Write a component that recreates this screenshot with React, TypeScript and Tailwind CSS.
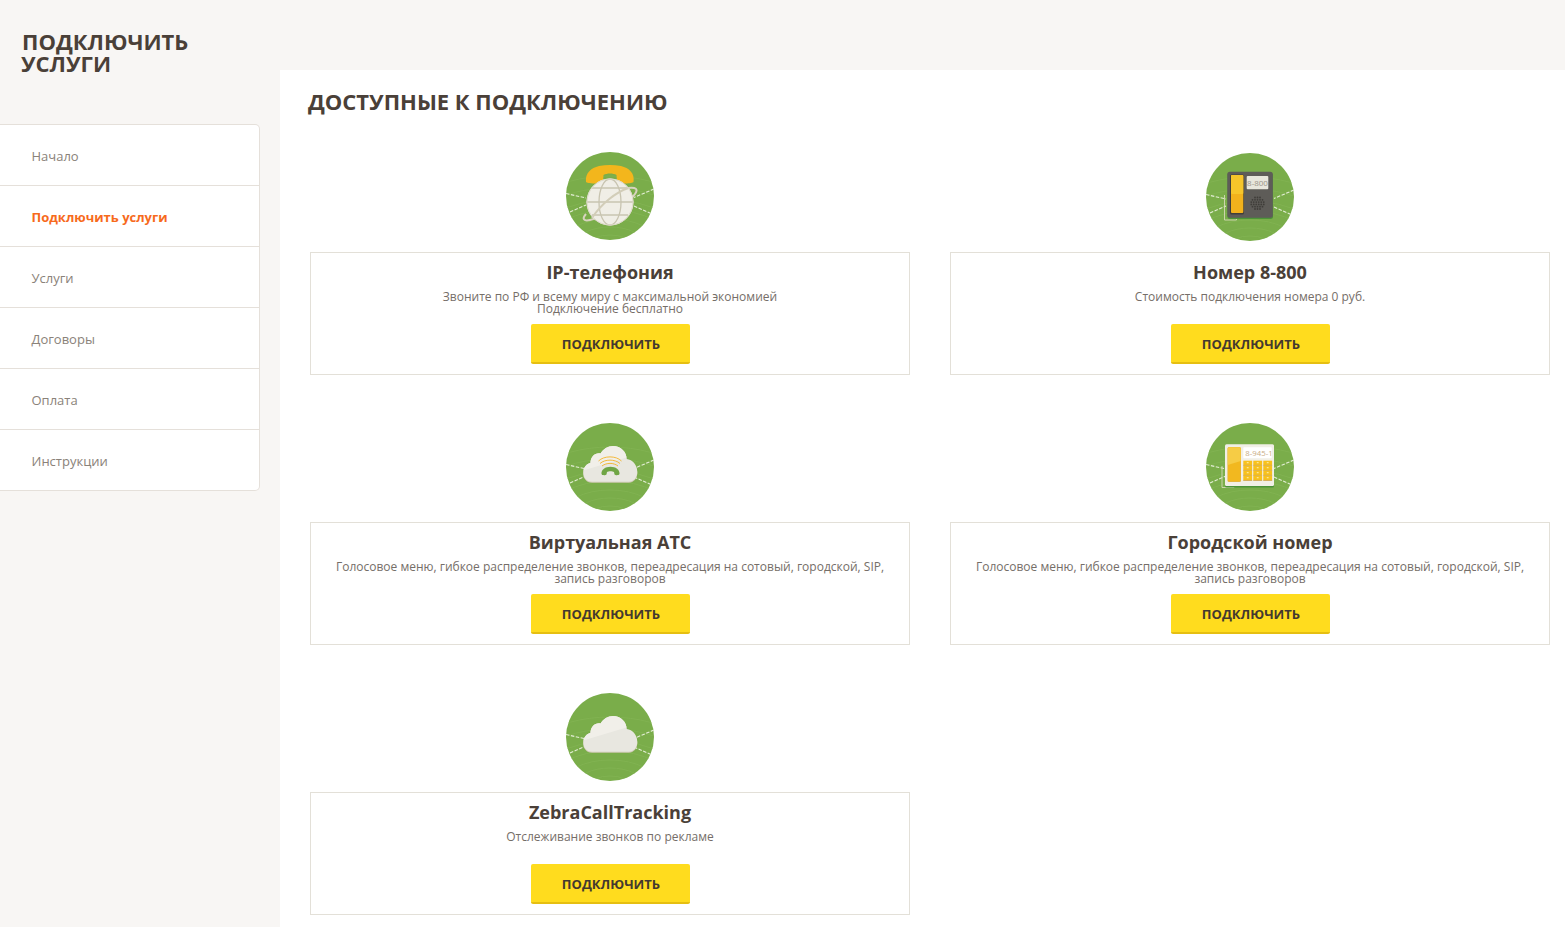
import React from "react";

const nav = ["Начало", "Подключить услуги", "Услуги", "Договоры", "Оплата", "Инструкции"];

function Base({ children }: { children: React.ReactNode }) {
  return (
    <svg width="88" height="88" viewBox="0 0 88 88" className="block">
      <defs>
        <clipPath id="circ"><circle cx="44" cy="44" r="44" /></clipPath>
      </defs>
      <circle cx="44" cy="44" r="44" fill="#7aad4a" />
      <g clipPath="url(#circ)" fill="none" stroke="#84b455" strokeWidth="0.7">
        <ellipse cx="44" cy="92" rx="20" ry="9" />
        <ellipse cx="44" cy="92" rx="34" ry="17" />
        <ellipse cx="44" cy="92" rx="48" ry="25" />
        <ellipse cx="44" cy="92" rx="62" ry="34" />
        <ellipse cx="44" cy="92" rx="76" ry="44" />
        <ellipse cx="44" cy="92" rx="90" ry="56" />
        <ellipse cx="44" cy="92" rx="104" ry="68" />
      </g>
      <g stroke="#e4eed6" strokeWidth="1.100" strokeDasharray="3.5 1.5" fill="none">
        <path d="M0 41.5L20 46" />
        <path d="M4 60L20 53" />
        <path d="M88 37L68 45.5" />
        <path d="M68 54L86 62" />
      </g>
      {children}
    </svg>
  );
}

function CloudShape({ id }: { id: string }) {
  const d = "M26 58.700C20 58.700 17.300 54 17.300 49.500C17.300 44 21 40.500 24.500 40C24.500 34 29 29.500 34.500 30.500C37 26 42 23 47 23C55 23 60.500 29 60.700 36C66.500 36.500 71.300 42 71.300 49C71.300 54.500 67.500 58.700 63 58.700Z";
  return (
    <>
      <defs>
        <clipPath id={id}><path d={d} /></clipPath>
      </defs>
      <path d={d} transform="translate(0 1)" fill="#cfc9b4" />
      <path d={d} fill="#e8e7e0" />
      <path d="M15 48L62 34L62 18L15 18Z" fill="#f1efe9" clipPath={`url(#${id})`} />
    </>
  );
}

function GlobeIcon() {
  return (
    <Base>
      <path d="M20 30C19 21 25 16 33 14C40 12.500 48 12.500 55 14C63 16 69 21 67.500 30C66.500 32 52 32 51 29.500L50.500 23C47 21 41 21 37.500 23L37 29.500C36 32 21 32 20 30Z" fill="#f3b61c" />
      <path d="M62 36C70 35 72.500 37 69 42C63 51 43 63 24 68C18 69.500 15.500 67 20 62" fill="none" stroke="#d8d3bf" strokeWidth="2" />
      <circle cx="44" cy="50" r="23.500" fill="#f0eee6" />
      <g fill="none" stroke="#c8c4b0" strokeWidth="1.300">
        <ellipse cx="44" cy="50" rx="11" ry="23" />
        <path d="M25.500 36H62.500" />
        <path d="M20.500 50H67.500" />
        <path d="M26 63H62" />
        <path d="M62.500 36C50 40 35 52 26 66" stroke="#d2cdb8" strokeWidth="2" />
        <circle cx="44" cy="50" r="23" stroke="#dcd8c8" strokeWidth="1" />
      </g>
    </Base>
  );
}

function Cord({ d }: { d: string }) {
  return <path d={d} fill="none" stroke="#d5d9b6" strokeWidth="0.9" />;
}

function Desk800Icon() {
  const dots: React.ReactNode[] = [];
  const rows = [3, 5, 6, 6, 5, 3];
  rows.forEach((n, r) => {
    for (let i = 0; i < n; i++) {
      dots.push(<circle key={`${r}-${i}`} cx={51.500 + (i - (n - 1) / 2) * 2.500} cy={44.500 + r * 2.300} r="0.900" fill="#3f3d39" />);
    }
  });
  return (
    <Base>
      <Cord d="M18.500 42V67H30.500V60" />
      <rect x="21.500" y="20" width="45.500" height="46" rx="2.500" fill="#4c9338" />
      <rect x="21.300" y="18.700" width="45.500" height="46" rx="2.500" fill="#5e5c58" />
      <rect x="24" y="21.500" width="14" height="40" rx="1.500" fill="#403f3b" />
      <rect x="25" y="22" width="12.300" height="38" rx="1" fill="#f2b21c" />
      <rect x="25" y="22" width="12.300" height="19" rx="1" fill="#f6c52a" />
      <rect x="40.700" y="23" width="21.600" height="13.300" rx="1" fill="#e8e6dc" />
      <text x="51.500" y="32.700" textAnchor="middle" fontSize="8" fill="#9b9488" fontFamily="'Open Sans', sans-serif">8-800</text>
      {dots}
    </Base>
  );
}

function CityIcon() {
  const keys: React.ReactNode[] = [];
  [37.300, 47.300, 57.300].forEach((x, c) => {
    [0, 1, 2, 3].forEach((r) => {
      keys.push(<rect key={`${c}-${r}`} x={x} y={37.700 + r * 5} width="8.800" height="5" fill="#f8c11c" />);
      keys.push(<rect key={`d${c}-${r}`} x={x + 3.500} y={39.200 + r * 5} width="1.800" height="1" fill="#fdeeb0" />);
      keys.push(<rect key={`s${c}-${r}`} x={x} y={41.900 + r * 5} width="8.800" height="0.800" fill="#c9a35e" />);
    });
  });
  return (
    <Base>
      <Cord d="M16 43V64.500H28V59" />
      <rect x="19" y="22.500" width="49" height="42" rx="1.500" fill="#4c9338" />
      <rect x="19" y="21.300" width="49" height="41.700" rx="1.500" fill="#f1efe6" />
      <rect x="21.500" y="24" width="13.500" height="35" rx="1.500" fill="#d9b35a" />
      <rect x="21.800" y="24.300" width="12.900" height="34.300" rx="1.500" fill="#f2b81f" />
      <path d="M21.800 42V25.800C21.800 25 22.500 24.300 23.300 24.300H33.200C34 24.300 34.700 25 34.700 25.800V38Z" fill="#f6cc45" />
      <rect x="37.300" y="24.300" width="28.400" height="11" rx="0.800" fill="#ffffff" />
      <svg x="37.300" y="24.300" width="28.400" height="11" viewBox="0 0 28.400 11">
        <text x="2" y="8.300" fontSize="7.800" fill="#c9ad86" fontFamily="'Open Sans', sans-serif">8-945-12</text>
      </svg>
      {keys}
    </Base>
  );
}

function VatsIcon() {
  return (
    <Base>
      <CloudShape id="cloud-a" />
      <g fill="none" stroke="#f3b32a" strokeWidth="0.900">
        <path d="M32.500 38C38 32.500 50 32.500 55.500 38" />
        <path d="M34 40.500C39 36 49 36 54 40.500" />
        <path d="M36 43C40.500 39.500 47.500 39.500 52 43" />
      </g>
      <path d="M35.500 51C35 46.500 39.500 43.700 44.500 43.700C49.500 43.700 54 46.500 53.500 51C53 52.500 49.500 52.500 48.500 51.500L48 49C46.500 48 42.500 48 41 49L40.500 51.500C39.500 52.500 36 52.500 35.500 51Z" fill="#6fa544" />
    </Base>
  );
}

function CloudIcon() {
  return (
    <Base>
      <CloudShape id="cloud-b" />
    </Base>
  );
}

function Service({ icon, title, lines, raised }: { icon: React.ReactNode; title: string; lines: string[]; raised?: boolean }) {
  return (
    <div className="flex flex-col items-center">
      <div className={raised ? "mb-[12px]" : "mt-[1px] mb-[11px]"}>{icon}</div>
      <div className="h-[123px] w-full border border-[#e3e0d8] bg-white pt-[7px] text-center">
        <h3 className="text-[18px] leading-[25px] font-bold text-[#4a4038]">{title}</h3>
        <div className="mt-[6px] h-[30px] text-[12px] leading-[12px] text-[#756e68]">
          {lines.map((l) => (
            <p key={l}>{l}</p>
          ))}
        </div>
        <button className="mx-auto mt-[3px] block h-[40px] w-[159px] rounded-[2px] border-b-2 border-[#e6bf12] bg-[#ffdc1e] pt-[4px] pl-[2px] text-[13px] font-bold text-[#43392f] uppercase">
          подключить
        </button>
      </div>
    </div>
  );
}

export default function App() {
  const vats = ["Голосовое меню, гибкое распределение звонков, переадресация на сотовый, городской, SIP,", "запись разговоров"];
  return (
    <div className="flex h-[927px] w-full overflow-hidden bg-[#f8f6f4] font-['Open_Sans',sans-serif]">
      <aside className="w-[280px] shrink-0">
        <h1 className="mt-[30px] ml-[22px] text-[22px] leading-[22px] font-bold text-[#4a4038] uppercase">
          Подключить
          <br />
          <span className="-ml-px">услуги</span>
        </h1>
        <nav className="mt-[50px] w-[260px] rounded-r-[5px] border border-l-0 border-[#e5e0da] bg-white">
          {nav.map((item, i) => (
            <a
              key={item}
              className={`flex items-center pt-[4px] pl-[31.5px] text-[13px] ${i > 0 ? "h-[61px] border-t border-[#e5e0da]" : "h-[60px]"} ${
                i === 1 ? "font-bold text-[#f76a1c]" : "text-[#8a8279]"
              }`}
            >
              {item}
            </a>
          ))}
        </nav>
      </aside>
      <main className="mt-[70px] flex-1 bg-white pl-[28px]">
        <h2 className="mt-[16px] text-[22px] leading-[30px] font-bold text-[#4a4038] uppercase">Доступные к подключению</h2>
        <div className="mt-[36px] ml-[2px] grid w-[1240px] grid-cols-2 gap-x-[40px] gap-y-[47px]">
          <Service raised icon={<GlobeIcon />} title="IP-телефония" lines={["Звоните по РФ и всему миру с максимальной экономией", "Подключение бесплатно"]} />
          <Service icon={<Desk800Icon />} title="Номер 8-800" lines={["Стоимость подключения номера 0 руб."]} />
          <Service icon={<VatsIcon />} title="Виртуальная АТС" lines={vats} />
          <Service icon={<CityIcon />} title="Городской номер" lines={vats} />
          <Service icon={<CloudIcon />} title="ZebraCallTracking" lines={["Отслеживание звонков по рекламе"]} />
        </div>
      </main>
    </div>
  );
}
